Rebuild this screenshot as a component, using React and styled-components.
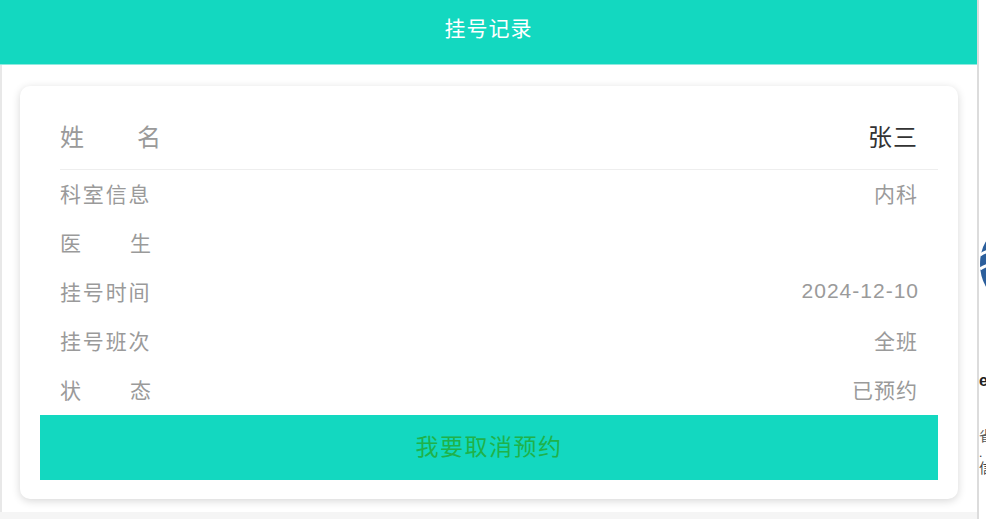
import React from "react";
import styled, { createGlobalStyle } from "styled-components";

const Global = createGlobalStyle`
  html, body { margin: 0; padding: 0; background: #f4f4f4; }
  body { font-family: "Liberation Sans", "Noto Sans CJK SC", sans-serif; overflow: hidden; }
  #root { width: 986px; height: 519px; }
`;

const Frame = styled.div`
  display: flex;
  width: 986px;
  height: 519px;
`;

const Main = styled.div`
  width: 977px;
  display: flex;
  flex-direction: column;
  background: #f5f5f5;
`;

const Header = styled.header`
  height: 64px;
  flex-shrink: 0;
  background: #13d8c0;
  border-bottom: 1px solid #8eeadf;
  display: flex;
  align-items: center;
  justify-content: center;
  color: #ffffff;
  font-size: 21px;
  letter-spacing: 1px;
  padding-bottom: 11px;
  box-sizing: content-box;
  height: 53px;
`;

const Body = styled.div`
  height: 447px;
  background: #ffffff;
  border-left: 2px solid #e8e8e8;
  padding: 21px 19px 0 18px;
  box-sizing: border-box;
`;

const Card = styled.section`
  background: #ffffff;
  border-radius: 10px;
  box-shadow: 0 2px 8px rgba(0, 0, 0, 0.16);
  padding: 16px 20px 19px 20px;
  display: flex;
  flex-direction: column;
`;

const NameRow = styled.div`
  margin-left: 20px;
  padding-right: 20px;
  height: 67px;
  border-bottom: 1px solid #eeeeee;
  display: flex;
  align-items: center;
  justify-content: space-between;
  font-size: 24px;
`;

const Row = styled.div`
  height: 49px;
  padding: 0 20px 3px 20px;
  box-sizing: border-box;
  display: flex;
  align-items: center;
  justify-content: space-between;
  font-size: 21px;
`;

const Label = styled.span`
  display: inline-block;
  width: ${(p) => p.$w}px;
  color: #9a9a9a;
  text-align: justify;
  text-align-last: justify;
  letter-spacing: ${(p) => (p.$spaced ? "1.5px" : "0")};
`;

const Value = styled.span`
  color: ${(p) => (p.$strong ? "#333333" : "#9a9a9a")};
  letter-spacing: ${(p) => (p.$num ? "1px" : "1px")};
  margin-right: ${(p) => (p.$num ? "-1px" : "0")};
`;

const CancelButton = styled.button`
  height: 65px;
  border: none;
  background: #13d8c0;
  color: #1fb24a;
  font-family: "Noto Sans CJK SC", sans-serif;
  font-size: 23px;
  letter-spacing: 1.5px;
  cursor: pointer;
  display: flex;
  align-items: center;
  justify-content: center;
  padding: 0 0 5px 0;
`;

const Side = styled.aside`
  width: 9px;
  background: #ffffff;
  border-left: 2px solid #dcdcdc;
  box-sizing: border-box;
  overflow: hidden;
  display: flex;
  flex-direction: column;
`;

const SideLogo = styled.svg`
  margin-top: 232px;
  width: 20px;
  height: 64px;
  flex-shrink: 0;
`;

const SideText = styled.span`
  font-size: ${(p) => p.$size}px;
  font-weight: ${(p) => (p.$bold ? 700 : 400)};
  color: ${(p) => p.$color};
  margin-top: ${(p) => p.$mt}px;
  height: ${(p) => p.$h}px;
  white-space: nowrap;
  line-height: ${(p) => p.$h}px;
  font-family: "Liberation Sans", "Noto Sans CJK SC", sans-serif;
`;

const rows = [
  { label: "科室信息", value: "内科" },
  { label: "医生", value: "" },
  { label: "挂号时间", value: "2024-12-10", num: true },
  { label: "挂号班次", value: "全班" },
  { label: "状态", value: "已预约" },
];

export default function App() {
  return (
    <>
      <Global />
      <Frame>
        <Main>
          <Header>挂号记录</Header>
          <Body>
            <Card>
              <NameRow>
                <Label $w={101}>姓名</Label>
                <Value $strong>张三</Value>
              </NameRow>
              {rows.map((r) => (
                <Row key={r.label}>
                  <Label $w={91} $spaced={r.label.length === 4}>
                    {r.label}
                  </Label>
                  <Value $num={r.num}>{r.value}</Value>
                </Row>
              ))}
              <CancelButton>我要取消预约</CancelButton>
            </Card>
          </Body>
        </Main>
        <Side>
          <SideLogo viewBox="0 0 20 64">
            <ellipse cx="20" cy="32" rx="19" ry="31" fill="#2c5f9c" />
            <path d="M1 23 Q10 17 20 19" stroke="#ffffff" strokeWidth="3" fill="none" />
            <path d="M1 37 Q10 31 20 33" stroke="#ffffff" strokeWidth="3" fill="none" />
          </SideLogo>
          <SideText $size={16} $h={18} $bold $color="#222" $mt={76}>e</SideText>
          <SideText $size={14} $h={16} $color="#555" $mt={38}>省</SideText>
          <SideText $size={12} $h={10} $color="#333" $mt={4}>.</SideText>
          <SideText $size={14} $h={16} $color="#444" $mt={2}>信</SideText>
        </Side>
      </Frame>
    </>
  );
}
